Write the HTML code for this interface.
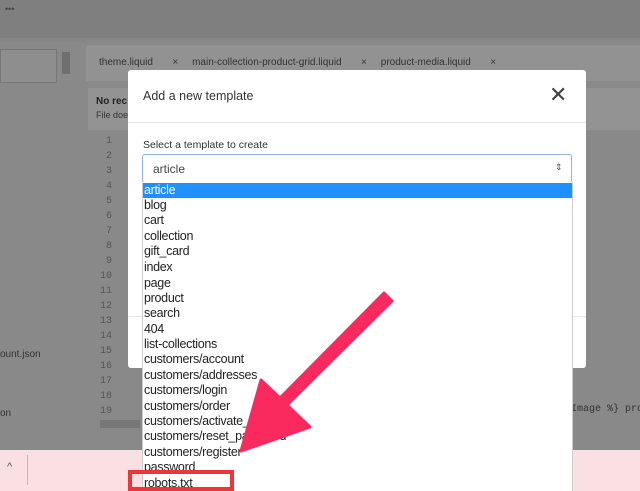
<!DOCTYPE html>
<html style="overflow:hidden;width:640px;height:491px"><head><style>
body{margin:0;width:640px;height:491px;overflow:hidden;background:#898989;font-family:"Liberation Sans",sans-serif;position:relative}
.a{position:absolute}
.ln{position:absolute;left:96px;width:16px;text-align:right;font-size:10px;color:#555;font-family:"Liberation Mono",monospace}
.it{position:absolute;left:1px;height:15px;line-height:15px;font-size:12.5px;color:#222;letter-spacing:-0.3px;white-space:nowrap}
</style></head><body>
<div class="a" style="left:0;top:0;width:640px;height:38px;background:#7f7f7f"></div>
<div class="a" style="left:5px;top:4px;font-size:9px;color:#444">•••</div>
<div class="a" style="left:0;top:38px;width:640px;height:4px;background:#868686"></div>
<div class="a" style="left:0;top:49px;width:55px;height:32px;border:1px solid #777;background:#8e8e8e"></div>
<div class="a" style="left:62px;top:52px;width:8px;height:22px;background:#6f6f6f"></div>
<div class="a" style="left:86px;top:45px;width:554px;height:36px;background:#929292"></div>
<div class="a" style="left:99px;top:57px;font-size:10px;color:#333;white-space:nowrap">theme.liquid &nbsp;&nbsp;&nbsp;&nbsp;&nbsp;&nbsp;× &nbsp;&nbsp;&nbsp;&nbsp;main-collection-product-grid.liquid &nbsp;&nbsp;&nbsp;&nbsp;&nbsp;&nbsp;× &nbsp;&nbsp;&nbsp;&nbsp;product-media.liquid &nbsp;&nbsp;&nbsp;&nbsp;&nbsp;&nbsp;×</div>
<div class="a" style="left:88px;top:88px;width:552px;height:42px;background:#939393"></div>
<div class="a" style="left:96px;top:96px;font-size:10px;font-weight:bold;color:#222">No rec</div>
<div class="a" style="left:96px;top:110px;font-size:9px;color:#333">File doe</div>
<div class="a" style="left:0;top:349px;font-size:10px;color:#333">ount.json</div>
<div class="a" style="left:0;top:408px;font-size:10px;color:#333">on</div>
<div class="a" style="left:571px;top:404px;font-size:10px;color:#333;font-family:'Liberation Mono',monospace;white-space:nowrap">Image %} pro</div>
<div class="a" style="left:100px;top:420px;width:40px;height:8px;background:#777"></div>
<div class="ln" style="top:136px">1</div><div class="ln" style="top:151px">2</div><div class="ln" style="top:166px">3</div><div class="ln" style="top:181px">4</div><div class="ln" style="top:196px">5</div><div class="ln" style="top:211px">6</div><div class="ln" style="top:226px">7</div><div class="ln" style="top:241px">8</div><div class="ln" style="top:256px">9</div><div class="ln" style="top:271px">10</div><div class="ln" style="top:286px">11</div><div class="ln" style="top:301px">12</div><div class="ln" style="top:316px">13</div><div class="ln" style="top:331px">14</div><div class="ln" style="top:346px">15</div><div class="ln" style="top:361px">16</div><div class="ln" style="top:376px">17</div><div class="ln" style="top:391px">18</div><div class="ln" style="top:406px">19</div>
<div class="a" style="left:0;top:450px;width:640px;height:41px;background:#fbe0e3"></div>
<div class="a" style="left:7px;top:461px;font-size:11px;color:#555">^</div>
<div class="a" style="left:27px;top:455px;width:1px;height:30px;background:#bbb"></div>
<div class="a" style="left:128px;top:70px;width:458px;height:298px;background:#fff;border-radius:3px"></div>
<div class="a" style="left:143px;top:89px;font-size:12.5px;color:#333">Add a new template</div>
<div class="a" style="left:549px;top:82px;font-size:22px;color:#444">✕</div>
<div class="a" style="left:128px;top:122px;width:458px;height:1px;background:#e6e6e6"></div>
<div class="a" style="left:143px;top:139px;font-size:10.5px;color:#333">Select a template to create</div>
<div class="a" style="left:142px;top:154px;width:428px;height:27px;border:1px solid #8fb3ea;border-radius:3px;background:#fff"></div>
<div class="a" style="left:153px;top:162px;font-size:12px;color:#444">article</div>
<div class="a" style="left:555px;top:162px;font-size:9px;color:#555">⇕</div>
<div class="a" style="left:128px;top:316px;width:458px;height:1px;background:#e6e6e6"></div>
<div class="a" style="left:142px;top:182px;width:429px;height:309px;background:#fff;border-left:1px solid #ccc;border-right:1px solid #ccc;overflow:hidden">
<div class="a" style="left:0;top:1px;width:429px;height:15px;background:#1e90ff"></div>
<div class="it" style="top:1px;color:#fff">article</div>
<div class="it" style="top:16px">blog</div><div class="it" style="top:31px">cart</div><div class="it" style="top:47px">collection</div><div class="it" style="top:62px">gift_card</div><div class="it" style="top:78px">index</div><div class="it" style="top:94px">page</div><div class="it" style="top:109px">product</div><div class="it" style="top:124px">search</div><div class="it" style="top:140px">404</div><div class="it" style="top:155px">list-collections</div><div class="it" style="top:170px">customers/account</div><div class="it" style="top:186px">customers/addresses</div><div class="it" style="top:201px">customers/login</div><div class="it" style="top:217px">customers/order</div><div class="it" style="top:232px">customers/activate_account</div><div class="it" style="top:247px">customers/reset_password</div><div class="it" style="top:263px">customers/register</div><div class="it" style="top:278px">password</div><div class="it" style="top:294px">robots.txt</div>
</div>
<div class="a" style="left:128px;top:470px;width:106px;height:21px;border:4px solid #f0353a;border-bottom:none;box-sizing:border-box"></div>
<div class="a" style="left:128px;top:487px;width:106px;height:4px;background:#f0353a"></div>
<svg class="a" style="left:0;top:0" width="640" height="491"><polygon points="384,293 392,301 287,405 310,427 241,451 261,380 280,398" fill="#fb2a5e" stroke="#fb2a5e" stroke-width="3" stroke-linejoin="round"/></svg>
</body></html>
